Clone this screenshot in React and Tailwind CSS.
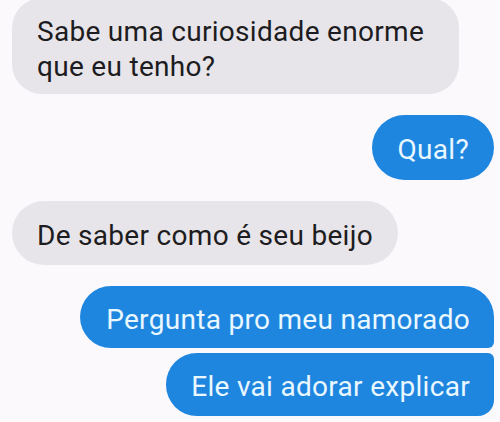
export default function App() {
  const gray = "bg-[#e7e5ea] text-[#1d1c20]";
  const blue = "bg-[#1f86e0] text-[#e9f7ff]";
  return (
    <div
      className="w-[500px] h-[422px] overflow-hidden bg-[#fbf9fc] flex flex-col"
      style={{ fontFamily: "Roboto, 'Noto Sans', sans-serif" }}
    >
      <div className="mt-[-2px] flex flex-col gap-[21px] text-[28px] leading-[35px] tracking-[0.3px]">
        <div className={`${gray} ml-[12px] w-[447px] rounded-[30px] pl-[25px] pr-[10px] pt-[16px] pb-[10px] whitespace-nowrap`}>
          Sabe uma curiosidade enorme
          <br />
          que eu tenho?
        </div>
        <div className="flex justify-end pr-[6px]">
          <div className={`${blue} rounded-[33px] pl-[26px] pr-[25px] pt-[17px] pb-[13px]`}>Qual?</div>
        </div>
        <div className="flex justify-start pl-[12px]">
          <div className={`${gray} rounded-[32px] px-[25px] pt-[17px] pb-[12px] whitespace-nowrap`}>
            De saber como é seu beijo
          </div>
        </div>
        <div className="flex flex-col items-end gap-[5px] pr-[6px]">
          <div className={`${blue} rounded-[31px] rounded-br-[6px] pl-[26px] pr-[24px] pt-[16px] pb-[11px] whitespace-nowrap`}>
            Pergunta pro meu namorado
          </div>
          <div className={`${blue} rounded-[31px] rounded-tr-[6px] rounded-br-[16px] pl-[25px] pr-[24px] pt-[16px] pb-[12px] whitespace-nowrap`}>
            Ele vai adorar explicar
          </div>
        </div>
      </div>
    </div>
  );
}
